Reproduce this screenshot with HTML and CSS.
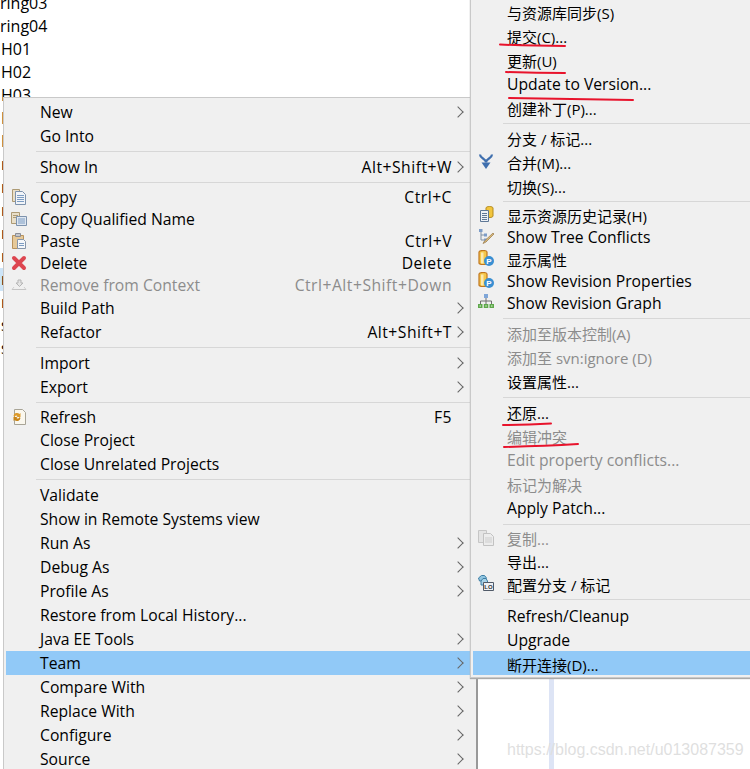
FILE: index.html
```html
<!DOCTYPE html>
<html lang="zh-CN">
<head>
    <meta charset="UTF-8">
    <title>Team menu</title>
    <link rel="stylesheet" href="styles.css">
</head>
<body>
    <svg class="defs" width="0" height="0">
        <symbol id="i-copy" viewBox="0 0 16 16">
            <path d="M1.5 .5h7v12h-7z" fill="#e9dfc9" stroke="#ad9a74"/>
            <path d="M4.5 2.5h7l3 3v10h-10z" fill="#f1f4f8" stroke="#7d92ad"/>
            <path d="M6 6.5h7M6 8.5h7M6 10.5h7M6 12.5h7" stroke="#7c9cc2"/>
        </symbol>
        <symbol id="i-copyq" viewBox="0 0 16 16">
            <path d="M.5 1.5h8v11h-8z" fill="#e9dfc9" stroke="#ad9a74"/>
            <path d="M2 4.5h5M2 6.5h5" stroke="#ad9a74"/>
            <path d="M5.5 5.5h10v9h-10z" fill="#dfe7f1" stroke="#7d92ad"/>
            <path d="M7 8h7M7 10h7M7 12h7" stroke="#7c9cc2"/>
        </symbol>
        <symbol id="i-paste" viewBox="0 0 16 16">
            <path d="M1.5 2.5h11v13h-11z" fill="#e6c999" stroke="#b8925c"/>
            <path d="M4.5 .5h5v3h-5z" fill="#c5c7cc" stroke="#8b8e96"/>
            <path d="M6.500 6.500h6l2 2v7h-8z" fill="#f5f7fa" stroke="#8796aa"/>
            <path d="M8 10.500h5M8 12.500h5" stroke="#7c9cc2"/>
        </symbol>
        <symbol id="i-delete" viewBox="0 0 16 16">
            <path d="M3 3l10 10M13 3L3 13" stroke="#dd4650" stroke-width="4" stroke-linecap="round"/>
        </symbol>
        <symbol id="i-remove" viewBox="0 0 16 16">
            <path d="M7 3h3v3h2l-3.500 3.500L5 6h2z" fill="#e4e4e4" stroke="#b5b5b5"/>
            <path d="M1 12.500h14" stroke="#c4c4c4"/>
            <path d="M3 10l-2 2.500M13 10l2 2.500" stroke="#cfcfcf"/>
        </symbol>
        <symbol id="i-refresh" viewBox="0 0 16 16">
            <path d="M3.500 .5h8l3 3v12h-11z" fill="#faf7ee" stroke="#a8a496"/>
            <path d="M2.500 7a3.500 3.500 0 0 1 6-2l1-1v4h-4l1-1a2 2 0 0 0-3 1z" fill="#dc9a2c"/>
            <path d="M9.500 9a3.500 3.500 0 0 1-6 2l-1 1V8h4l-1 1a2 2 0 0 0 3-1z" fill="#c98518"/>
        </symbol>
        <symbol id="i-merge" viewBox="0 0 16 16">
            <path d="M2 1.500c0 4 6 4 6 8M14 1.500c0 4-6 4-6 8" fill="none" stroke="#3f6fae" stroke-width="2.200"/>
            <path d="M3.500 9.500h9L8 16z" fill="#3f6fae"/>
        </symbol>
        <symbol id="i-history" viewBox="0 0 16 16">
            <path d="M8 2c0-2 7-2 7 0v8c0 1-2 1.500-3 1.500H8z" fill="#f2c53d" stroke="#b38a1f"/>
            <path d="M2.500 4.500h8v11h-8z" fill="#eef2f7" stroke="#5f7896"/>
            <path d="M4 7.500h5M4 9.500h5M4 11.500h5M4 13.500h5" stroke="#5f7896"/>
        </symbol>
        <symbol id="i-tree" viewBox="0 0 16 16">
            <path d="M3 3v9h4M3 7h3" fill="none" stroke="#7f8fa3"/>
            <path d="M1 1h3.500v3H1zM6 5.500h3v3H6zM6 10.500h3v3H6z" fill="#7c9cc8"/>
            <path d="M15 5l1 1-8 8-3 1.500L6.500 13z" fill="#d9b877" stroke="#96794a" stroke-width=".7"/>
        </symbol>
        <symbol id="i-graph" viewBox="0 0 16 16">
            <path d="M6 0h4v4H6z" fill="#7fa6d8"/>
            <path d="M8 4v3M2.500 10V7h11v3M8 7v3" fill="none" stroke="#6f6f6f"/>
            <path d="M0 10h4.500v4H0zM5.800 10h4.500v4H5.800zM11.500 10H16v4h-4.500z" fill="#5fa84c"/>
            <path d="M1.500 11.300h1.500v1.500H1.500zM7.300 11.300h1.500v1.500H7.300zM13 11.300h1.500v1.500H13z" fill="#b5dda8"/>
        </symbol>
        <symbol id="i-copyoff" viewBox="0 0 16 16">
            <path d="M.5 .5h8v12h-8z" fill="#e4e4e4" stroke="#c6c6c6"/>
            <path d="M5.500 3.500h7l3 3v9h-10z" fill="#ececec" stroke="#c2c2c2"/>
            <path d="M7 8h7M7 10h7M7 12h7" stroke="#cdcdcd"/>
        </symbol>
    </svg>

    <div class="workspace">
        <ul class="tree">
            <li class="cut">ring03</li>
            <li class="cut">ring04</li>
            <li>H01</li>
            <li>H02</li>
            <li>H03</li>
            <li>H04</li>
            <li>H05</li>
            <li>r</li>
            <li>r</li>
            <li>r</li>
            <li>r</li>
            <li>r</li>
            <li class="selected">r</li>
            <li>r</li>
            <li>s</li>
            <li>s</li>
        </ul>

        <div class="editor-stripe"></div>
        <div class="watermark">https://blog.csdn.net/u013087359</div>

        <!-- main context menu -->
        <div class="menu menu-main">
            <div class="item tall"><span class="icon"></span><span class="label latin">New</span><span class="arrow"></span></div>
            <div class="item tall"><span class="icon"></span><span class="label latin">Go Into</span></div>
            <div class="sep"></div>
            <div class="item tall"><span class="icon"></span><span class="label latin">Show In</span><span class="key">Alt+Shift+W</span><span class="arrow"></span></div>
            <div class="sep"></div>
            <div class="item"><span class="icon"><svg><use href="#i-copy"/></svg></span><span class="label latin">Copy</span><span class="key">Ctrl+C</span></div>
            <div class="item"><span class="icon"><svg><use href="#i-copyq"/></svg></span><span class="label latin">Copy Qualified Name</span></div>
            <div class="item"><span class="icon"><svg><use href="#i-paste"/></svg></span><span class="label latin">Paste</span><span class="key">Ctrl+V</span></div>
            <div class="item"><span class="icon"><svg><use href="#i-delete"/></svg></span><span class="label latin">Delete</span><span class="key">Delete</span></div>
            <div class="item off"><span class="icon"><svg><use href="#i-remove"/></svg></span><span class="label latin">Remove from Context</span><span class="key">Ctrl+Alt+Shift+Down</span></div>
            <div class="item tall"><span class="icon"></span><span class="label latin">Build Path</span><span class="arrow"></span></div>
            <div class="item tall"><span class="icon"></span><span class="label latin">Refactor</span><span class="key">Alt+Shift+T</span><span class="arrow"></span></div>
            <div class="sep"></div>
            <div class="item tall"><span class="icon"></span><span class="label latin">Import</span><span class="arrow"></span></div>
            <div class="item tall"><span class="icon"></span><span class="label latin">Export</span><span class="arrow"></span></div>
            <div class="sep"></div>
            <div class="item"><span class="icon"><svg><use href="#i-refresh"/></svg></span><span class="label latin">Refresh</span><span class="key">F5</span></div>
            <div class="item tall"><span class="icon"></span><span class="label latin">Close Project</span></div>
            <div class="item tall"><span class="icon"></span><span class="label latin">Close Unrelated Projects</span></div>
            <div class="sep"></div>
            <div class="item tall"><span class="icon"></span><span class="label latin">Validate</span></div>
            <div class="item tall"><span class="icon"></span><span class="label latin">Show in Remote Systems view</span></div>
            <div class="item tall"><span class="icon"></span><span class="label latin">Run As</span><span class="arrow"></span></div>
            <div class="item tall"><span class="icon"></span><span class="label latin">Debug As</span><span class="arrow"></span></div>
            <div class="item tall"><span class="icon"></span><span class="label latin">Profile As</span><span class="arrow"></span></div>
            <div class="item tall"><span class="icon"></span><span class="label latin">Restore from Local History...</span></div>
            <div class="item tall"><span class="icon"></span><span class="label latin">Java EE Tools</span><span class="arrow"></span></div>
            <div class="item tall active"><span class="icon"></span><span class="label latin">Team</span><span class="arrow"></span></div>
            <div class="item tall"><span class="icon"></span><span class="label latin">Compare With</span><span class="arrow"></span></div>
            <div class="item tall"><span class="icon"></span><span class="label latin">Replace With</span><span class="arrow"></span></div>
            <div class="item tall"><span class="icon"></span><span class="label latin">Configure</span><span class="arrow"></span></div>
            <div class="item tall"><span class="icon"></span><span class="label latin">Source</span><span class="arrow"></span></div>
        </div>

        <!-- Team submenu -->
        <div class="menu menu-team">
            <div class="item tall"><span class="icon"></span><span class="label">与资源库同步(S)</span></div>
            <div class="item tall"><span class="icon"></span><span class="label">提交(C)...</span></div>
            <div class="item tall"><span class="icon"></span><span class="label">更新(U)</span></div>
            <div class="item tall"><span class="icon"></span><span class="label latin">Update to Version...</span></div>
            <div class="item tall"><span class="icon"></span><span class="label">创建补丁(P)...</span></div>
            <div class="sep sep-short"></div>
            <div class="item tall"><span class="icon"></span><span class="label">分支 / 标记...</span></div>
            <div class="item tall"><span class="icon"><svg><use href="#i-merge"/></svg></span><span class="label">合并(M)...</span></div>
            <div class="item tall"><span class="icon"></span><span class="label">切换(S)...</span></div>
            <div class="sep sep-short"></div>
            <div class="item"><span class="icon"><svg><use href="#i-history"/></svg></span><span class="label">显示资源历史记录(H)</span></div>
            <div class="item"><span class="icon"><svg><use href="#i-tree"/></svg></span><span class="label latin">Show Tree Conflicts</span></div>
            <div class="item"><span class="icon">
                <svg viewBox="0 0 16 16">
                    <path d="M1 2c0-2 8-2 8 0v11c0 2-8 2-8 0z" fill="#f5c84a" stroke="#c0761e" stroke-width="1.200"/>
                    <path d="M3 2.500h2.500v11H3z" fill="#fbe9b0"/>
                    <circle cx="11" cy="11" r="5" fill="#3a8fd2"/>
                    <text class="icon-letter" x="11" y="14" text-anchor="middle">P</text>
                </svg>
            </span><span class="label">显示属性</span></div>
            <div class="item"><span class="icon">
                <svg viewBox="0 0 16 16">
                    <path d="M1 2c0-2 8-2 8 0v11c0 2-8 2-8 0z" fill="#f5c84a" stroke="#c0761e" stroke-width="1.200"/>
                    <path d="M3 2.500h2.500v11H3z" fill="#fbe9b0"/>
                    <circle cx="11" cy="11" r="5" fill="#3a8fd2"/>
                    <text class="icon-letter" x="11" y="14" text-anchor="middle">P</text>
                </svg>
            </span><span class="label latin">Show Revision Properties</span></div>
            <div class="item"><span class="icon"><svg><use href="#i-graph"/></svg></span><span class="label latin">Show Revision Graph</span></div>
            <div class="sep"></div>
            <div class="item tall off"><span class="icon"></span><span class="label">添加至版本控制(A)</span></div>
            <div class="item tall off"><span class="icon"></span><span class="label">添加至 svn:ignore (D)</span></div>
            <div class="item tall"><span class="icon"></span><span class="label">设置属性...</span></div>
            <div class="sep"></div>
            <div class="item tall"><span class="icon"></span><span class="label">还原...</span></div>
            <div class="item tall off"><span class="icon"></span><span class="label">编辑冲突</span></div>
            <div class="item tall off"><span class="icon"></span><span class="label latin">Edit property conflicts...</span></div>
            <div class="item tall off"><span class="icon"></span><span class="label">标记为解决</span></div>
            <div class="item tall"><span class="icon"></span><span class="label latin">Apply Patch...</span></div>
            <div class="sep"></div>
            <div class="item mid off"><span class="icon"><svg><use href="#i-copyoff"/></svg></span><span class="label">复制...</span></div>
            <div class="item mid"><span class="icon"></span><span class="label">导出...</span></div>
            <div class="item"><span class="icon">
                <svg viewBox="0 0 16 16">
                    <path d="M.5 3l3-2.500h3l2 2.500-2 3h-5z" fill="#8fc4df" stroke="#3e7ea5"/>
                    <path d="M3 6l2-2.500h3l1.500 2.500v4H3z" fill="#a7d1e6" stroke="#3e7ea5"/>
                    <path d="M5.500 7.500h10v8h-10z" fill="#eef1f5" stroke="#515a68"/>
                    <text class="icon-tag" x="10.500" y="14" text-anchor="middle">LO</text>
                </svg>
            </span><span class="label">配置分支 / 标记</span></div>
            <div class="sep sep-last"></div>
            <div class="item tall"><span class="icon"></span><span class="label latin">Refresh/Cleanup</span></div>
            <div class="item tall"><span class="icon"></span><span class="label latin">Upgrade</span></div>
            <div class="item tall active"><span class="icon"></span><span class="label">断开连接(D)...</span></div>
        </div>

        <!-- red marks drawn over the screenshot -->
        <svg class="marks" width="750" height="769">
            <path d="M500 44.500q30 1.500 65 1.500"/>
            <path d="M506 72q30 1 59 1"/>
            <path d="M509 98q60 1 124 2"/>
            <path d="M503 425q24 0 48-1.500"/>
            <path d="M504 447q40-1 74-3"/>
        </svg>
    </div>
</body>
</html>
```

FILE: styles.css
```css
* {
    margin: 0;
    padding: 0;
    box-sizing: border-box;
}
html, body {
    width: 750px;
    height: 769px;
    overflow: hidden;
    background-color: white;
}
body {
    font-family: "Open Sans", "Noto Sans CJK SC", sans-serif;
    font-size: 15px;
    color: #000;
}
.defs {
    position: absolute;
}
.workspace {
    position: relative;
    width: 750px;
    height: 769px;
    overflow: hidden;
}
.tree {
    list-style: none;
    margin-top: -8px;
    font-size: 16px;
}
.tree li {
    height: 23px;
    line-height: 23px;
    padding-left: 1px;
}
.tree li.cut {
    padding-left: 0;
}
.tree li.selected {
    background-color: #cde4f7;
}
.editor-stripe {
    position: absolute;
    left: 549px;
    top: 670px;
    bottom: 0;
    width: 5px;
    background-color: #dde4f5;
}
.watermark {
    position: absolute;
    left: 507px;
    top: 741px;
    font-family: "Liberation Sans", sans-serif;
    font-size: 16px;
    color: #dfdfdf;
}
.menu {
    position: absolute;
    background-color: #f0f0f0;
    border: 1px solid #c9c9c9;
    padding: 2px;
}
.menu-main {
    left: 3px;
    top: 97px;
    width: 475px;
    border-right: 2px solid #999;
}
.menu-team {
    left: 470px;
    top: -4px;
    width: 300px;
    padding-right: 0;
    box-shadow: 0 1px 1px #aaa;
}
.item {
    display: flex;
    align-items: center;
    height: 22px;
}
.menu-team .item {
    padding-top: 2px;
}
.item.tall {
    height: 24px;
}
.item.mid {
    height: 23px;
}
.item.off {
    color: #8c8c8c;
}
.item.active {
    background-color: #91c9f7;
}
.icon {
    flex: none;
    display: flex;
    align-items: center;
    justify-content: center;
    width: 34px;
    height: 16px;
    padding-right: 8px;
}
.menu-team .icon {
    margin-top: -2px;
}
.icon svg {
    width: 16px;
    height: 16px;
}
.icon-letter {
    font: bold 8px "Liberation Sans", sans-serif;
    fill: white;
}
.icon-tag {
    font: bold 6px "Liberation Sans", sans-serif;
    fill: #333;
}
.label {
    white-space: nowrap;
}
.latin {
    font-size: 15.7px;
}
.key {
    margin-left: auto;
    white-space: nowrap;
    font-size: 15.7px;
    letter-spacing: 0.5px;
}
.arrow {
    position: relative;
    flex: none;
    width: 22px;
    height: 16px;
}
.item .label + .arrow {
    margin-left: auto;
}
.arrow::after {
    content: "";
    position: absolute;
    left: 2px;
    top: 4px;
    width: 7px;
    height: 7px;
    border-top: 1px solid #666;
    border-right: 1px solid #666;
    transform: rotate(45deg);
}
.key:last-child {
    margin-right: 22px;
}
.sep {
    height: 1px;
    margin: 3px 0 3px 30px;
    background-color: #d7d7d7;
}
.menu-team .sep {
    margin: 5px 0 1px 30px;
}
.menu-team .sep-short {
    margin: 4px 0 1px 30px;
}
.menu-team .sep-last {
    margin: 5px 0 3px 30px;
}
.marks {
    position: absolute;
    left: 0;
    top: 0;
}
.marks path {
    fill: none;
    stroke: #e8132c;
    stroke-width: 2;
    stroke-linecap: round;
}
```
